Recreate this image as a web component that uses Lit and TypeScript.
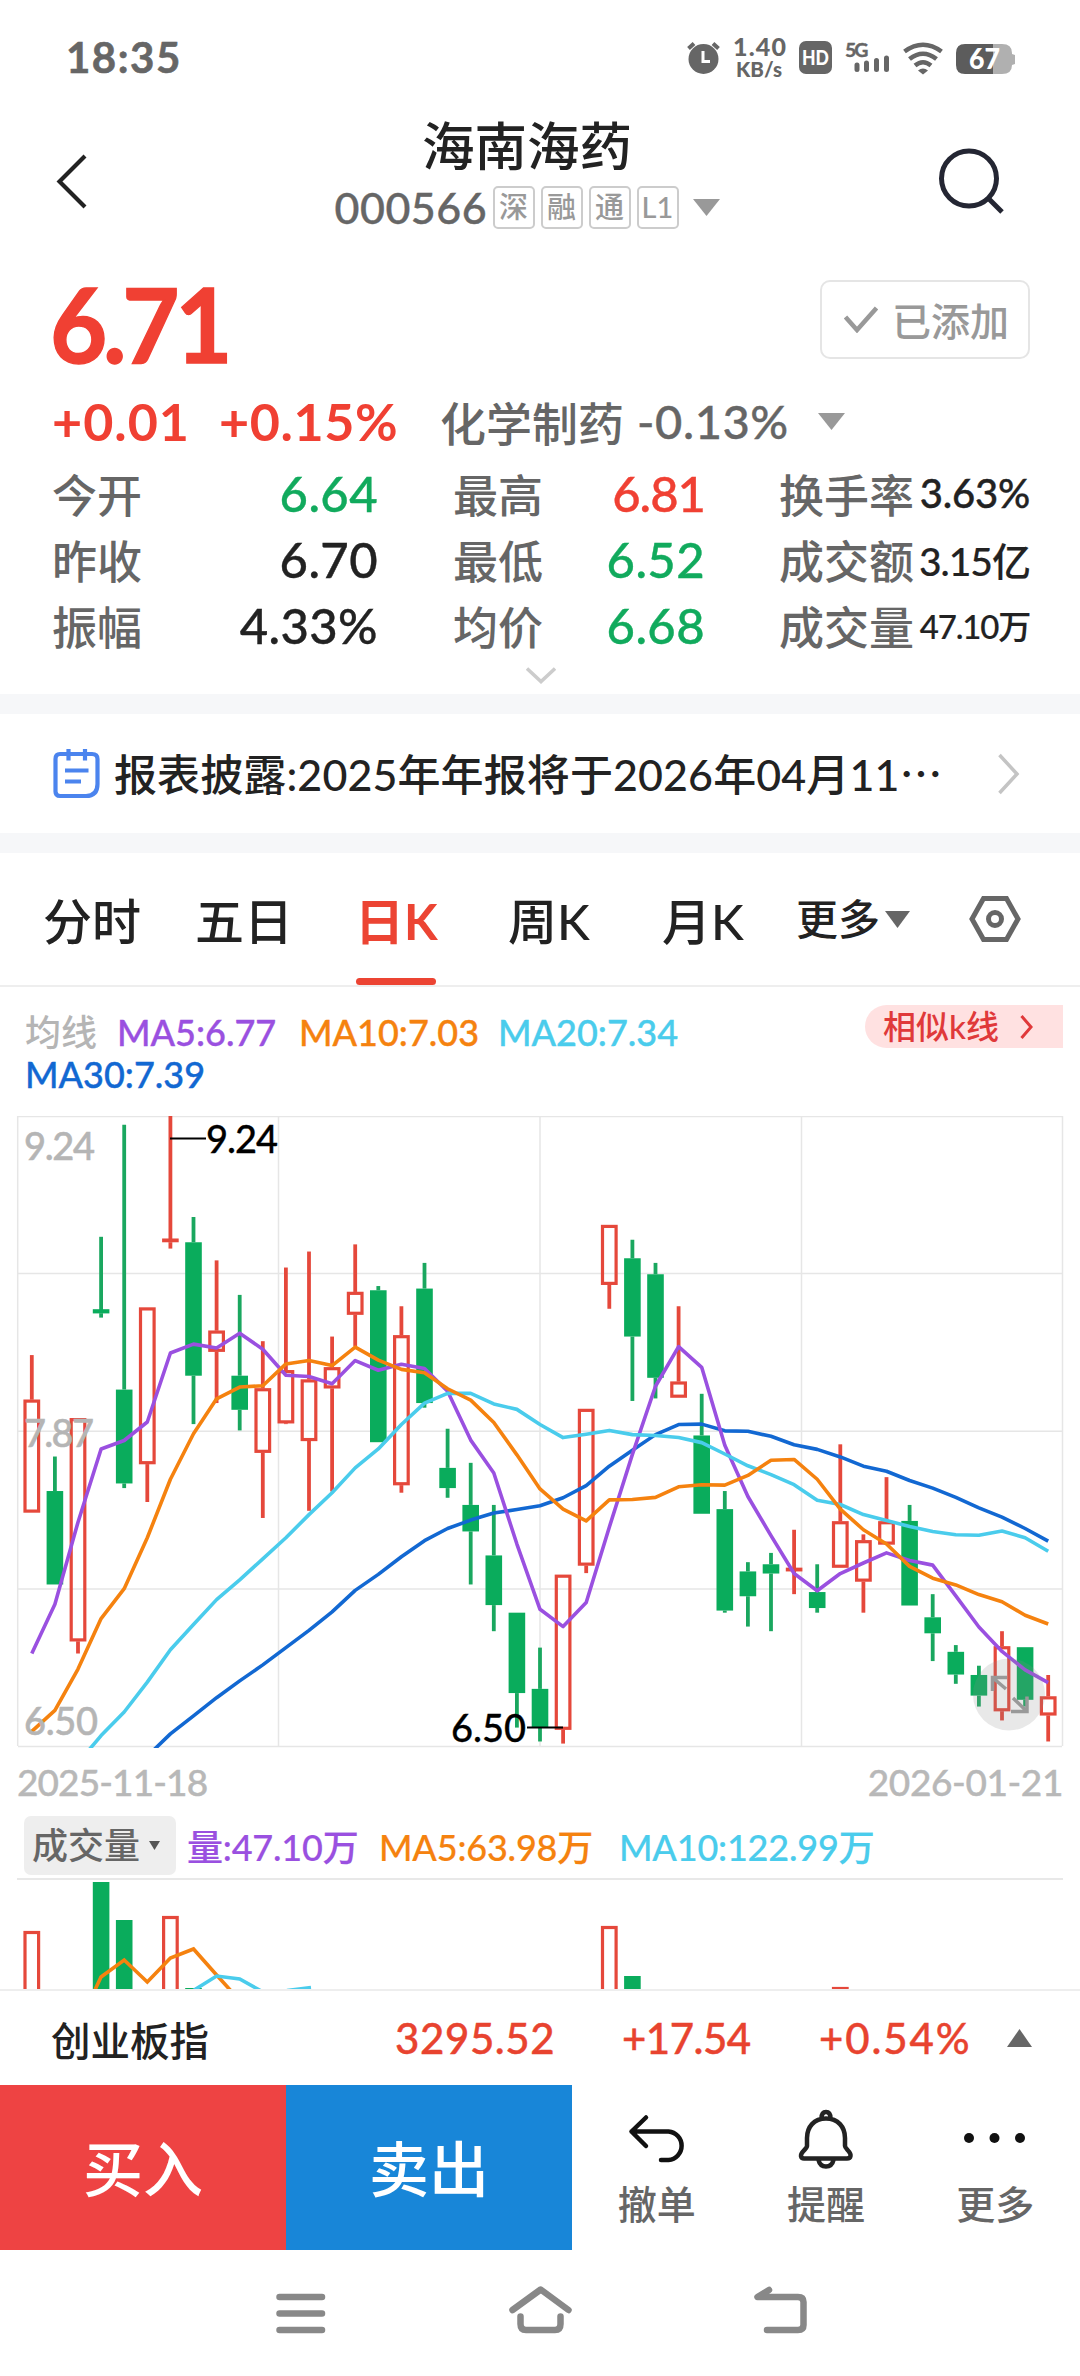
import { LitElement, html, svg, css } from "lit";
import { customElement } from "lit/decorators.js";

type Kind = "r" | "g";
type Candle = [Kind, number, number, number, number];

const STEP = 23.1;
const FIRST = 31.8;
const cx = (i: number) => FIRST + STEP * i;

// Price samples use a vertical scale of 1568 units for a 660px pane; the pane's frame starts 16px down.
const cy = (v: number) => (v * 660) / 1568 - 16;

// kind, high, body top, body bottom, low
const CANDLES: Candle[] = [
  ["r", 606, 712, 980, 980], ["g", 847, 929, 1151, 1151], ["r", 756, 756, 1286, 1315],
  ["g", 325, 497, 507, 517], ["g", 59, 688, 911, 922], ["r", 493, 493, 865, 955],
  ["r", 38, 329, 338, 353], ["g", 278, 338, 655, 770], ["r", 381, 548, 598, 720],
  ["g", 463, 655, 736, 785], ["r", 573, 685, 838, 993], ["r", 398, 642, 768, 770],
  ["r", 360, 664, 810, 976], ["r", 562, 635, 685, 930], ["r", 343, 456, 510, 585],
  ["g", 442, 452, 813, 813], ["r", 490, 559, 915, 933], ["g", 387, 448, 720, 731],
  ["g", 781, 874, 922, 945], ["g", 862, 962, 1025, 1151], ["g", 962, 1082, 1200, 1262],
  ["g", 1218, 1218, 1409, 1491], ["g", 1301, 1399, 1491, 1524], ["r", 1128, 1128, 1496, 1529],
  ["r", 734, 734, 1106, 1124], ["r", 297, 297, 439, 496], ["g", 332, 376, 562, 715],
  ["g", 387, 414, 660, 709], ["r", 490, 669, 707, 707], ["g", 698, 797, 983, 983],
  ["g", 929, 972, 1213, 1218], ["g", 1098, 1120, 1179, 1251], ["g", 1076, 1103, 1125, 1262],
  ["r", 1021, 1111, 1118, 1174], ["g", 1103, 1169, 1207, 1218], ["r", 818, 1001, 1111, 1111],
  ["r", 1032, 1046, 1144, 1218], ["r", 896, 1001, 1056, 1056], ["g", 962, 1000, 1201, 1201],
  ["g", 1174, 1229, 1267, 1333], ["g", 1295, 1311, 1365, 1387], ["g", 1344, 1366, 1415, 1441],
  ["r", 1262, 1298, 1452, 1474], ["g", 1300, 1300, 1425, 1441], ["r", 1366, 1417, 1462, 1524],
];

interface Series { cls: string; start: number; values: number[]; }

const SERIES: Series[] = [
  { cls: "ma30", start: 5, values: [1559, 1506, 1463, 1420, 1380, 1342, 1301, 1260, 1216, 1165, 1127, 1085, 1047, 1018, 998, 981, 973, 964, 945, 916, 870, 832, 795, 771, 770, 786, 787, 799, 819, 830, 848, 870, 882, 904, 922, 944, 969, 991, 1018, 1048] },
  { cls: "ma5", start: 0, values: [1315, 1198, 1003, 829, 809, 765, 601, 580, 589, 554, 592, 654, 657, 674, 619, 642, 628, 638, 692, 808, 886, 1055, 1210, 1251, 1194, 1015, 842, 680, 586, 635, 820, 942, 1035, 1125, 1166, 1125, 1100, 1076, 1094, 1105, 1178, 1252, 1310, 1354, 1384] },
  { cls: "ma20", start: 2, values: [1575, 1510, 1454, 1383, 1306, 1246, 1187, 1140, 1090, 1040, 985, 933, 874, 829, 771, 720, 697, 697, 722, 735, 771, 802, 794, 785, 795, 797, 802, 814, 841, 869, 890, 914, 951, 961, 985, 999, 1013, 1025, 1033, 1034, 1024, 1040, 1072] },
  { cls: "ma10", start: 0, values: [1500, 1450, 1352, 1232, 1161, 1040, 901, 793, 710, 682, 679, 627, 619, 631, 587, 618, 640, 648, 686, 713, 766, 843, 924, 972, 1000, 950, 949, 944, 919, 914, 915, 892, 856, 854, 901, 972, 1021, 1055, 1108, 1136, 1152, 1175, 1192, 1224, 1245] },
];

// index, kind, top of the bar within the visible volume strip
const VOLUMES: [number, Kind, number][] = [
  [0, "r", 51], [3, "g", 2], [4, "g", 40], [6, "r", 36], [7, "g", 108],
  [25, "r", 46], [26, "g", 96], [35, "r", 107],
];

const STATS = [
  ["今开", "6.64", "green", "最高", "6.81", "red", "换手率", "3.63%", "s0"],
  ["昨收", "6.70", "dark", "最低", "6.52", "green", "成交额", "3.15亿", "s1"],
  ["振幅", "4.33%", "dark", "均价", "6.68", "green", "成交量", "47.10万", "s2"],
];

@customElement("price-chart")
class PriceChart extends LitElement {
  static styles = css`
    :host { display: block; height: 632px; }
    svg { display: block; overflow: hidden; }
    .grid { stroke: #e6e6e6; stroke-width: 1.5; fill: none; }
    .wick-r { stroke: #e5483b; stroke-width: 3.8; }
    .wick-g { stroke: #1aa75f; stroke-width: 3.8; }
    .flat-r { fill: #e5483b; }
    .body-r { fill: none; stroke: #e5483b; stroke-width: 3.2; }
    .body-g { fill: #0aac5c; }
    .line { fill: none; stroke-width: 3.6; stroke-linejoin: round; }
    .ma5 { stroke: #9a50e0; }
    .ma10 { stroke: #f5820f; }
    .ma20 { stroke: #4accec; }
    .ma30 { stroke: #1268d2; }
    text { font-family: Lato, "Liberation Sans", sans-serif; font-size: 38px; font-kerning: none; }
    .axis { fill: #b5b5b5; stroke: #b5b5b5; stroke-width: .5; }
    .mark { fill: #000; stroke: #000; stroke-width: .3; }
    .leader { stroke: #000; stroke-width: 2; }
    .zoom { fill: rgba(140, 140, 140, .2); }
    .arrow { stroke: #999; stroke-width: 3.5; fill: none; }
  `;

  private candle([kind, hi, top, bottom, lo]: Candle, i: number) {
    const x = cx(i);
    const t = cy(top);
    const b = cy(bottom);
    const flat = bottom - top < 15;
    const wick = `wick-${kind}`;
    return svg`
      <line class=${wick} x1=${x} x2=${x} y1=${cy(hi)} y2=${flat ? b : t}></line>
      <line class=${wick} x1=${x} x2=${x} y1=${b} y2=${cy(lo)}></line>
      ${kind === "r" && !flat
        ? svg`<rect class="body-r" x=${x - 6.8} y=${t + 1.4} width="13.6" height=${b - t - 2.8}></rect>`
        : svg`<rect class=${kind === "r" ? "flat-r" : "body-g"} x=${x - 8.3} y=${t} width="16.6" height=${Math.max(b - t, 3.8)}></rect>`}
    `;
  }

  render() {
    return html`<svg width="1080" height="632" viewBox="0 0 1080 632">
      <path class="grid" d="M18 0.5H1062 M18 157.4H1062 M18 315.2H1062 M18 473H1062 M18 630.5H1062 M17.7 0V630 M278.5 0V630 M540 0V630 M801.5 0V630 M1062.5 0V630"></path>
      ${CANDLES.map((c, i) => this.candle(c, i))}
      ${SERIES.map((s) => svg`<polyline class="line ${s.cls}" points=${s.values.map((v, i) => `${cx(s.start + i)},${cy(v)}`).join(" ")}></polyline>`)}
      <text class="axis" x="24" y="43.5" textLength="71">9.24</text>
      <text class="axis" x="24" y="331" textLength="70">7.87</text>
      <text class="axis" x="24" y="618.5" textLength="74">6.50</text>
      <line class="leader" x1="170" x2="206" y1="22.5" y2="22.5"></line>
      <text class="mark" x="206" y="36.5" textLength="72">9.24</text>
      <line class="leader" x1="527" x2="563" y1="611.5" y2="611.5"></line>
      <text class="mark" x="451" y="625.5" textLength="75">6.50</text>
      <circle class="zoom" cx="1009" cy="578.5" r="36"></circle>
      <path class="arrow" d="M1007 561.5H992.5V575 M992.5 561.5L1006 573 M1011 595.5H1027V580.5 M1027 595.5L1013 582"></path>
    </svg>`;
  }
}

@customElement("volume-chart")
class VolumeChart extends LitElement {
  static styles = css`
    :host { display: block; height: 109px; }
    svg { display: block; overflow: hidden; }
    .r { fill: none; stroke: #e5483b; stroke-width: 3.2; }
    .g { fill: #0aac5c; }
    .line { fill: none; stroke-width: 3.6; }
    .ma5 { stroke: #f5820f; }
    .ma10 { stroke: #4accec; }
  `;

  render() {
    return html`<svg width="1080" height="109" viewBox="0 0 1080 109">
      ${VOLUMES.map(([i, kind, top]) => kind === "r"
        ? svg`<rect class="r" x=${cx(i) - 6.8} y=${top + 1.5} width="13.6" height="140"></rect>`
        : svg`<rect class="g" x=${cx(i) - 8.3} y=${top} width="16.6" height="140"></rect>`)}
      <polyline class="line ma5" points="94,112 101,97 124.2,80 147.3,102 170.4,78 193.5,69 216.6,95 232,112"></polyline>
      <polyline class="line ma10" points="191,112 216.6,96 239.7,99 263,112"></polyline>
      <polyline class="line ma10" points="287,110.5 311,107.5"></polyline>
    </svg>`;
  }
}

@customElement("app-root")
class AppRoot extends LitElement {
  static styles = css`
    :host {
      display: flex; flex-direction: column; width: 1080px; height: 2376px; overflow: hidden;
      background: #fff; color: #222; box-sizing: border-box;
      font-family: Lato, "Noto Sans CJK SC", sans-serif; font-weight: 500; white-space: nowrap;
    }
    * { box-sizing: border-box; }
    svg { display: block; flex: none; }
    .red { color: #f04033; }
    .green { color: #11aa5d; }
    .dark { color: #222; }
    .code, .val, .rate, .num { -webkit-text-stroke: .4px currentColor; }

    .status { height: 114px; padding: 0 65px 0 66px; display: flex; align-items: center; justify-content: space-between; color: #666; }
    .clock { font-size: 42px; font-weight: 700; line-height: 50px; letter-spacing: 1.5px; -webkit-text-stroke: .6px currentColor; }
    .tray { width: 330px; height: 50px; }

    .head { height: 140px; display: flex; justify-content: space-between; padding: 0 76px 0 55px; }
    .back { margin-top: 39px; }
    .find { margin-top: 32px; }
    .names { display: flex; flex-direction: column; align-items: center; padding-left: 31px; }
    .title { font-size: 52.5px; line-height: 64px; }
    .codes { display: flex; align-items: center; height: 58px; color: #666; }
    .code { font-size: 43px; width: 158px; letter-spacing: .5px; }
    .chip { width: 42px; height: 43px; margin-right: 6px; border: 2px solid #ccc; border-radius: 5px; color: #999; font-size: 29px; line-height: 38px; text-align: center; }
    .codes svg { margin-left: 8px; }

    .quote { height: 440px; padding: 0 50px 0 52px; display: flex; flex-direction: column; }
    .priceline { display: flex; justify-content: space-between; height: 134px; }
    .price { font-size: 104px; font-weight: 700; line-height: 137px; letter-spacing: -4.5px; margin-left: -2px; transform: scaleX(.95); transform-origin: left; -webkit-text-stroke: 1.4px currentColor; }
    .added { margin-top: 26px; width: 210px; height: 79px; border: 2px solid #e5e5e5; border-radius: 10px; display: flex; align-items: center; gap: 14px; padding: 0 0 1px 22px; font-size: 39px; color: #999; }
    .change { display: flex; align-items: center; height: 66px; font-size: 52px; font-weight: 700; }
    .delta { width: 167px; letter-spacing: 1px; }
    .pct { width: 221px; letter-spacing: .6px; }
    .sector { font-size: 46px; color: #666; font-weight: 500; display: flex; align-items: center; gap: 13px; }
    .rate { font-size: 47px; letter-spacing: .6px; }
    .sector svg { margin-left: 16px; }
    .stats { display: grid; grid-template-columns: 326px 75px 252px 74px 251px; grid-auto-rows: 66px; margin-top: 6px; }
    .stat { display: flex; justify-content: space-between; align-items: center; }
    .stat:nth-child(3n + 1) { grid-column: 1; }
    .stat:nth-child(3n + 2) { grid-column: 3; }
    .stat:nth-child(3n) { grid-column: 5; }
    .name { font-size: 45px; color: #666; }
    .val { font-size: 49px; letter-spacing: .4px; }
    .val.red { letter-spacing: -1px; }
    .val.s0 { font-size: 40px; letter-spacing: -.2px; }
    .val.s1 { font-size: 39px; letter-spacing: -1px; -webkit-text-stroke-width: .2px; }
    .val.s2 { font-size: 33px; letter-spacing: -1.2px; -webkit-text-stroke-width: .2px; }
    .fold { margin: 9px auto 0; }

    .band { height: 20px; flex: none; background: #f6f7f9; }
    .notice { height: 119px; display: flex; align-items: center; padding: 0 60px 0 52px; }
    .notice-text { font-size: 43px; margin: -3px 0 0 13px; flex: 1; letter-spacing: .1px; }

    .tabs { height: 134px; border-bottom: 2px solid #eee; display: flex; align-items: center; padding: 0 0 0 43px; font-size: 49px; }
    .tab { position: relative; height: 132px; line-height: 136px; }
    .t1 { width: 152px; } .t2 { width: 160px; } .t3 { width: 153px; color: #ec4433; font-weight: 700; }
    .t4 { width: 154px; } .t5 { width: 134px; }
    .t3::after { content: ""; position: absolute; left: 1px; bottom: 0; width: 80px; height: 7px; border-radius: 4px; background: #ec4433; }
    .t6 { width: 173px; font-size: 42px; display: flex; align-items: center; gap: 5px; }

    .legend { height: 129px; padding: 18px 17px 0 25px; display: flex; justify-content: space-between; font-size: 36px; }
    .mas { display: flex; flex-wrap: wrap; width: 720px; align-content: flex-start; line-height: 42px; padding-top: 6px; }
    .mas span { height: 42px; }
    .gray { color: #b5b5b5; }
    .purple { color: #9a50e0; } .orange { color: #f5820f; } .cyan { color: #4accec; } .blue { color: #1268d2; }
    .m0 { width: 92px; } .m1 { width: 182px; } .m2 { width: 199px; }
    .similar { width: 198px; height: 43px; background: #ffe1e1; border-radius: 22px 0 0 22px; color: #e0393a; font-size: 33px; line-height: 43px; display: flex; align-items: center; padding-left: 18px; gap: 21px; }

    .dates { display: flex; justify-content: space-between; padding: 0 17px; height: 68px; line-height: 68px; font-size: 37px; color: #b8b8b8; }
    .from { letter-spacing: -.9px; } .to { letter-spacing: -.4px; }
    .volhead { height: 64px; margin: 0 17px; border-bottom: 2px solid #e8e8e8; display: flex; font-size: 36px; line-height: 63px; }
    .volhead .num { -webkit-text-stroke-width: .2px; letter-spacing: -.2px; }
    .pick { width: 152px; height: 59px; margin-left: 7px; background: #eee; border-radius: 7px; color: #666; display: flex; align-items: center; padding-left: 8px; gap: 9px; }
    .v0 { width: 192px; margin-left: 11px; } .v1 { width: 240px; }

    .index { height: 96px; border-top: 2px solid #eee; display: flex; align-items: center; padding: 0 48px 0 51px; font-size: 42px; color: #e8432f; }
    .index-name { color: #222; font-size: 39.5px; width: 344px; }
    .i1 { width: 227px; letter-spacing: .6px; } .i2 { width: 197px; letter-spacing: -.5px; } .i3 { flex: 1; letter-spacing: 1.9px; }

    .actions { height: 165px; display: flex; }
    .trade { width: 286px; color: #fff; font-size: 60px; line-height: 168px; text-align: center; font-weight: 500; }
    .buy { background: #ee4343; } .sell { background: #1886d8; }
    .tool { flex: 1; display: flex; flex-direction: column; align-items: center; font-size: 39px; color: #666; line-height: 46px; padding-top: 22px; gap: 10px; }
    .nav { height: 126px; display: flex; justify-content: center; }
  `;

  private drop(fill: string, w = 27, h = 17) {
    return html`<svg width=${w} height=${h} viewBox="0 0 27 17" preserveAspectRatio="none"><path d="M0 0H27L13.5 17Z" fill=${fill}></path></svg>`;
  }

  private tray() {
    return html`<svg class="tray" viewBox="684 32 330 50" fill="#666" font-family="Lato, sans-serif" font-weight="900">
      <circle cx="702.5" cy="59" r="15"></circle>
      <path d="M687.500 48.5L693 43.5 M712 43.5L717.500 48.5" stroke="#666" stroke-width="4"></path>
      <path d="M702 51V61.5H709" stroke="#fff" stroke-width="3" fill="none"></path>
      <text x="732" y="56" font-size="25" textLength="53">1.40</text>
      <text x="735" y="76.500" font-size="20.500" textLength="46">KB/s</text>
      <rect x="798" y="41" width="33" height="33" rx="7"></rect>
      <text x="801" y="65" font-size="21" fill="#fff" textLength="27" lengthAdjust="spacingAndGlyphs">HD</text>
      <text x="844" y="57" font-size="19.500" font-weight="700" stroke="#666" stroke-width=".4" textLength="23.500">5G</text>
      <path d="M856 65V69.500 M865.5 63V69.500 M875.5 60.500V69.500 M885.5 58V69.500" stroke="#666" stroke-width="5" stroke-linecap="round"></path>
      <path d="M903.5 51.500Q922 38 940.5 51.500 M908.5 59Q922 48.500 935.500 59 M914 65.500Q922 59 930 65.500" stroke="#666" stroke-width="4.600" fill="none"></path>
      <path d="M917 70.500Q922 66.500 927 70.500L922 74.500Z"></path>
      <path d="M992 44H1001Q1011 44 1011 53V54L1014 55V64L1011 65Q1011 74 1001 74H992Z" fill="#b0b0b0"></path>
      <path d="M992 44H964Q955 44 955 53V65Q955 74 964 74H992Z" fill="#5c5c5c"></path>
      <text x="968" y="69" font-size="28" fill="#fff" textLength="31" lengthAdjust="spacingAndGlyphs">67</text>
    </svg>`;
  }

  render() {
    return html`
      <div class="status"><span class="clock">18:35</span>${this.tray()}</div>

      <div class="head">
        <svg class="back" width="32" height="56" viewBox="55 153 32 56"><path d="M85 156L59.500 181.500L85 207" fill="none" stroke="#222" stroke-width="4.200"></path></svg>
        <div class="names">
          <div class="title">海南海药</div>
          <div class="codes">
            <span class="code">000566</span>
            <span class="chip">深</span><span class="chip">融</span><span class="chip">通</span><span class="chip">L1</span>
            ${this.drop("#999")}
          </div>
        </div>
        <svg class="find" width="68" height="68" viewBox="936 146 68 68" fill="none" stroke="#242633" stroke-width="5"><circle cx="969" cy="178.500" r="27.500"></circle><path d="M988 198L1002 212"></path></svg>
      </div>

      <div class="quote">
        <div class="priceline">
          <span class="price red">6.71</span>
          <div class="added">
            <svg width="34" height="27" viewBox="0 0 34 27"><path d="M1.500 11L13 24L32.500 2" fill="none" stroke="#999" stroke-width="4.500"></path></svg>
            <span>已添加</span>
          </div>
        </div>
        <div class="change">
          <span class="delta red">+0.01</span><span class="pct red">+0.15%</span>
          <span class="sector"><span>化学制药</span><span class="rate">-0.13%</span>${this.drop("#999")}</span>
        </div>
        <div class="stats">
          ${STATS.map((r) => html`
            <div class="stat"><span class="name">${r[0]}</span><span class="val ${r[2]}">${r[1]}</span></div>
            <div class="stat"><span class="name">${r[3]}</span><span class="val ${r[5]}">${r[4]}</span></div>
            <div class="stat"><span class="name">${r[6]}</span><span class="val dark ${r[8]}">${r[7]}</span></div>`)}
        </div>
        <svg class="fold" width="30" height="17" viewBox="0 0 30 17"><path d="M1 1.500L15 14.500L29 1.500" fill="none" stroke="#ccc" stroke-width="3.500"></path></svg>
      </div>

      <div class="band"></div>
      <div class="notice">
        <svg width="49" height="52" viewBox="52 748 49 52" fill="none" stroke="#4b84ee" stroke-width="4.200"><path d="M60 754H92Q97.500 754 97.500 759V784Q97.500 796 86 796H60Q55.500 796 55.500 791.500V759Q55.500 754 60 754Z M68.500 749V760.500 M85 749V760.500 M65 770.500H88.500 M65 781.500H81"></path></svg>
        <span class="notice-text">报表披露:2025年年报将于2026年04月11⋯</span>
        <svg width="22" height="42" viewBox="0 0 22 42"><path d="M1.500 2L19 21L1.500 40" fill="none" stroke="#c4c4c4" stroke-width="3.500"></path></svg>
      </div>
      <div class="band"></div>

      <div class="tabs">
        <span class="tab t1">分时</span><span class="tab t2">五日</span><span class="tab t3">日K</span>
        <span class="tab t4">周K</span><span class="tab t5">月K</span>
        <span class="tab t6">更多${this.drop("#666", 25, 17)}</span>
        <svg width="52" height="46" viewBox="0 0 52 46" fill="none" stroke="#666" stroke-width="5"><path d="M14.500 2.500H37.500L49 23L37.500 43.500H14.500L3 23Z"></path><circle cx="26" cy="23" r="6.500"></circle></svg>
      </div>

      <div class="legend">
        <div class="mas">
          <span class="gray m0">均线</span><span class="num purple m1">MA5:6.77</span><span class="num orange m2">MA10:7.03</span><span class="num cyan">MA20:7.34</span>
          <span class="num blue">MA30:7.39</span>
        </div>
        <div class="similar"><span>相似k线</span><svg width="13" height="24" viewBox="0 0 13 24"><path d="M1.500 1L11 12L1.500 23" fill="none" stroke="#e0393a" stroke-width="3"></path></svg></div>
      </div>

      <price-chart></price-chart>
      <div class="dates"><span class="num from">2025-11-18</span><span class="num to">2026-01-21</span></div>
      <div class="volhead">
        <div class="pick">成交量${this.drop("#555", 11, 9)}</div>
        <span class="num purple v0">量:47.10万</span><span class="num orange v1">MA5:63.98万</span><span class="num cyan">MA10:122.99万</span>
      </div>
      <volume-chart></volume-chart>

      <div class="index">
        <span class="index-name">创业板指</span><span class="num i1">3295.52</span><span class="num i2">+17.54</span><span class="num i3">+0.54%</span>
        <svg width="25" height="18" viewBox="0 0 25 18"><path d="M0 18H25L12.500 0Z" fill="#666"></path></svg>
      </div>

      <div class="actions">
        <div class="trade buy">买入</div><div class="trade sell">卖出</div>
        <div class="tool">
          <svg width="60" height="64" viewBox="626 2107 60 64" fill="none" stroke="#111" stroke-width="4.500" stroke-linecap="round" stroke-linejoin="round"><path d="M645 2117.500L630.500 2131.500L645 2146 M630.500 2131.500H667.500A14.300 14.300 0 0 1 667.500 2160H660"></path></svg>
          <span>撤单</span>
        </div>
        <div class="tool">
          <svg width="60" height="64" viewBox="795 2107 60 64" fill="none" stroke="#222" stroke-width="4.500" stroke-linejoin="round"><path d="M825 2118.500C837 2118.500 844 2127 844 2138V2146C844 2149 850.500 2152 849.500 2156Q849 2158.500 846 2158.500H803Q800.500 2158.500 800 2156C799.500 2152 806 2149 806 2146V2138C806 2127 813 2118.500 825 2118.500Z M820.500 2118.500Q820.500 2112 825 2112Q829.500 2112 829.500 2118.500 M817.500 2160Q819 2166.500 825 2166.500Q831 2166.500 832.500 2160"></path></svg>
          <span>提醒</span>
        </div>
        <div class="tool">
          <svg width="64" height="64" viewBox="963 2107 64 64" fill="#111"><circle cx="969" cy="2138" r="5"></circle><circle cx="994.500" cy="2138" r="5"></circle><circle cx="1020" cy="2138" r="5"></circle></svg>
          <span>更多</span>
        </div>
      </div>

      <div class="nav">
        <svg width="1080" height="126" viewBox="0 2250 1080 126" fill="none" stroke="#888" stroke-width="6.500" stroke-linecap="round" stroke-linejoin="round">
          <path d="M279.500 2297H322 M279.500 2313.500H322 M279.500 2330H322"></path>
          <path d="M512.500 2310L540.700 2289.500L568.500 2310 M520.500 2316.500V2324Q520.500 2330 526 2330H555Q560.500 2330 560.500 2324V2316.500"></path>
          <path d="M769 2290L757.500 2297H798Q803.500 2297 803.500 2302V2325Q803.500 2330 798 2330H767"></path>
        </svg>
      </div>
    `;
  }
}
